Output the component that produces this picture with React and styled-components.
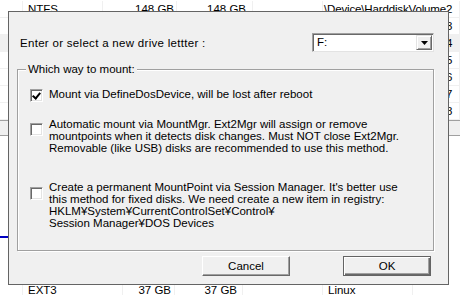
import React from 'react'
import styled, { createGlobalStyle } from 'styled-components'

const GlobalStyle = createGlobalStyle`
    html, body {
        margin: 0;
        padding: 0;
        background: #ffffff;
    }
    body {
        width: 460px;
        height: 295px;
        overflow: hidden;
        font-family: "Liberation Sans", Arial, sans-serif;
        font-size: 11.5px;
        color: #000;
    }
`;

const volumes = [2, 3, 4, 5, 6, 7, 8]

function App() {
    return (
        <Screen>
            <GlobalStyle />
            <VolumeList>
                {volumes.map((n) => (
                    <Row key={n} selected={n === 4}>
                        <Cell w={23} />
                        <Cell w={80} pad={5}>{n === 2 ? 'NTFS' : ''}</Cell>
                        <Cell w={74} right rp={2}>{n === 2 ? '148 GB' : ''}</Cell>
                        <Cell w={76} right rp={6}>{n === 2 ? '148 GB' : ''}</Cell>
                        <Cell w={70} />
                        <Cell pad={1} grow tight>{`\\Device\\HarddiskVolume${n}`}</Cell>
                    </Row>
                ))}
            </VolumeList>
            <Splitter />
            <DiskList>
                <BlueMark />
                <Row plain>
                    <Cell w={23} />
                    <Cell w={100} pad={5}>EXT3</Cell>
                    <Cell w={52} right rp={3}>37 GB</Cell>
                    <Cell w={68} right rp={5}>37 GB</Cell>
                    <Cell w={80} />
                    <Cell w={90} pad={5}>Linux</Cell>
                </Row>
            </DiskList>

            <Dialog>
                <PromptRow>
                    <Prompt>Enter or select a new drive lettter :</Prompt>
                    <Combo>
                        <ComboText>F:</ComboText>
                        <DropButton>
                            <svg width="7" height="4" viewBox="0 0 7 4">
                                <path d="M0 0h7L3.5 4z" fill="#000" />
                            </svg>
                        </DropButton>
                    </Combo>
                </PromptRow>

                <GroupBox>
                    <Legend>Which way to mount:</Legend>
                    <Option top={18} boxTop={1}>
                        <CheckBox checked />
                        <OptionText>Mount via DefineDosDevice, will be lost after reboot</OptionText>
                    </Option>
                    <Option top={16} boxTop={5}>
                        <CheckBox />
                        <OptionText>
                            Automatic mount via MountMgr. Ext2Mgr will assign or remove<br />
                            mountpoints when it detects disk changes. Must NOT close Ext2Mgr.<br />
                            Removable (like USB) disks are recommended to use this method.
                        </OptionText>
                    </Option>
                    <Option top={27} boxTop={6}>
                        <CheckBox />
                        <OptionText>
                            Create a permanent MountPoint via Session Manager. It's better use<br />
                            this method for fixed disks. We need create a new item in registry:<br />
                            HKLM¥System¥CurrentControlSet¥Control¥<br />
                            Session Manager¥DOS Devices
                        </OptionText>
                    </Option>
                </GroupBox>

                <ButtonRow>
                    <Button>Cancel</Button>
                    <Button primary>OK</Button>
                </ButtonRow>
            </Dialog>
        </Screen>
    )
}

const Screen = styled.div`
    position: relative;
    width: 460px;
    height: 295px;
    overflow: hidden;
    background: #fff;
`;

const VolumeList = styled.div`
    display: flex;
    flex-direction: column;
    padding-top: 1px;
`;

const Row = styled.div`
    display: flex;
    height: 17px;
    align-items: center;
    white-space: nowrap;
    background: ${(p) => (p.selected ? '#f0f0f0' : '#fff')};
    box-shadow: ${(p) => (p.plain ? 'none' : 'inset 0 -1px 0 #f0f0f0')};
`;

const Cell = styled.div`
    flex: ${(p) => (p.grow ? '1' : `0 0 ${p.w}px`)};
    padding-left: ${(p) => p.pad || 0}px;
    padding-right: ${(p) => p.rp || 0}px;
    text-align: ${(p) => (p.right ? 'right' : 'left')};
    letter-spacing: ${(p) => (p.tight ? '-0.15px' : 'normal')};
    box-sizing: border-box;
    height: 100%;
    line-height: 17px;
    border-right: 1px solid #f0f0f0;
    overflow: hidden;
`;

const Splitter = styled.div`
    height: 14px;
    background: #f0f0f0;
    border-top: 1px solid #a0a0a0;
    border-bottom: 1px solid #a0a0a0;
`;

const DiskList = styled.div`
    display: flex;
    flex-direction: column;
`;

const BlueMark = styled.div`
    height: 2px;
    width: 30px;
    margin: 100px 0 44px;
    background: #0000c0;
`;

const Dialog = styled.div`
    position: absolute;
    left: 8px;
    top: 11px;
    width: 441px;
    height: 274px;
    box-sizing: border-box;
    border: 1px solid #646464;
    background: #f0f0f0;
    display: flex;
    flex-direction: column;
    padding: 21px 14px 0 8px;
`;

const PromptRow = styled.div`
    display: flex;
    align-items: center;
    justify-content: space-between;
    height: 19px;
    padding-left: 3px;
`;

const Prompt = styled.span`
    letter-spacing: 0.3px;
`;

const Combo = styled.div`
    width: 122px;
    height: 19px;
    box-sizing: border-box;
    background: #fff;
    border-top: 1px solid #a0a0a0;
    border-left: 1px solid #a0a0a0;
    border-right: 1px solid #e3e3e3;
    border-bottom: 1px solid #e3e3e3;
    box-shadow: inset 1px 1px 0 #696969;
    display: flex;
    align-items: center;
    justify-content: space-between;
    padding: 1px 1px 1px 4px;
`;

const ComboText = styled.span`
    line-height: 15px;
`;

const DropButton = styled.div`
    width: 16px;
    height: 15px;
    box-sizing: border-box;
    background: #f0f0f0;
    border-top: 1px solid #e3e3e3;
    border-left: 1px solid #e3e3e3;
    border-right: 1px solid #696969;
    border-bottom: 1px solid #696969;
    box-shadow: inset 1px 1px 0 #fff, inset -1px -1px 0 #a0a0a0;
    display: flex;
    align-items: center;
    justify-content: center;
`;

const GroupBox = styled.div`
    position: relative;
    margin: 17px 0 0 0;
    height: 182px;
    box-sizing: border-box;
    border: 1px solid #a0a0a0;
    box-shadow: 1px 1px 0 #fff, inset 1px 1px 0 #fff;
    padding: 0 0 0 12px;
    display: flex;
    flex-direction: column;
`;

const Legend = styled.span`
    position: absolute;
    left: 8px;
    top: -7px;
    padding: 0 2px;
    line-height: 12px;
    background: #f0f0f0;
`;

const Option = styled.div`
    display: flex;
    align-items: flex-start;
    gap: 6px;
    margin-top: ${(p) => p.top}px;

    & > :first-child {
        margin-top: ${(p) => p.boxTop}px;
    }
`;

const CheckBox = styled.span`
    flex: 0 0 13px;
    width: 13px;
    height: 13px;
    box-sizing: border-box;
    border-top: 1px solid #a0a0a0;
    border-left: 1px solid #a0a0a0;
    border-right: 1px solid #fff;
    border-bottom: 1px solid #fff;
    box-shadow: inset 1px 1px 0 #696969, inset -1px -1px 0 #e3e3e3;
    background: #fff;
    position: relative;

    &::after {
        content: "";
        display: ${(p) => (p.checked ? 'block' : 'none')};
        position: absolute;
        left: 3px;
        top: 1px;
        width: 3px;
        height: 6px;
        border-right: 2px solid #000;
        border-bottom: 2px solid #000;
        transform: rotate(40deg);
    }
`;

const OptionText = styled.div`
    line-height: 12px;
    white-space: nowrap;
`;

const ButtonRow = styled.div`
    display: flex;
    justify-content: flex-end;
    gap: 53px;
    margin-top: 5px;
    padding-right: 3px;
`;

const Button = styled.button`
    width: 88px;
    height: 20px;
    box-sizing: border-box;
    font: inherit;
    color: #000;
    background: #f0f0f0;
    padding: 0;
    cursor: pointer;
    border-radius: 0;
    ${(p) => p.primary ? `
        border: 1px solid #646464;
        box-shadow: inset 1px 1px 0 #fff, inset -1px -1px 0 #696969, inset -2px -2px 0 #a0a0a0;
    ` : `
        border-top: 1px solid #fff;
        border-left: 1px solid #fff;
        border-right: 1px solid #696969;
        border-bottom: 1px solid #696969;
        box-shadow: inset -1px -1px 0 #a0a0a0;
    `}
`;

export default App
